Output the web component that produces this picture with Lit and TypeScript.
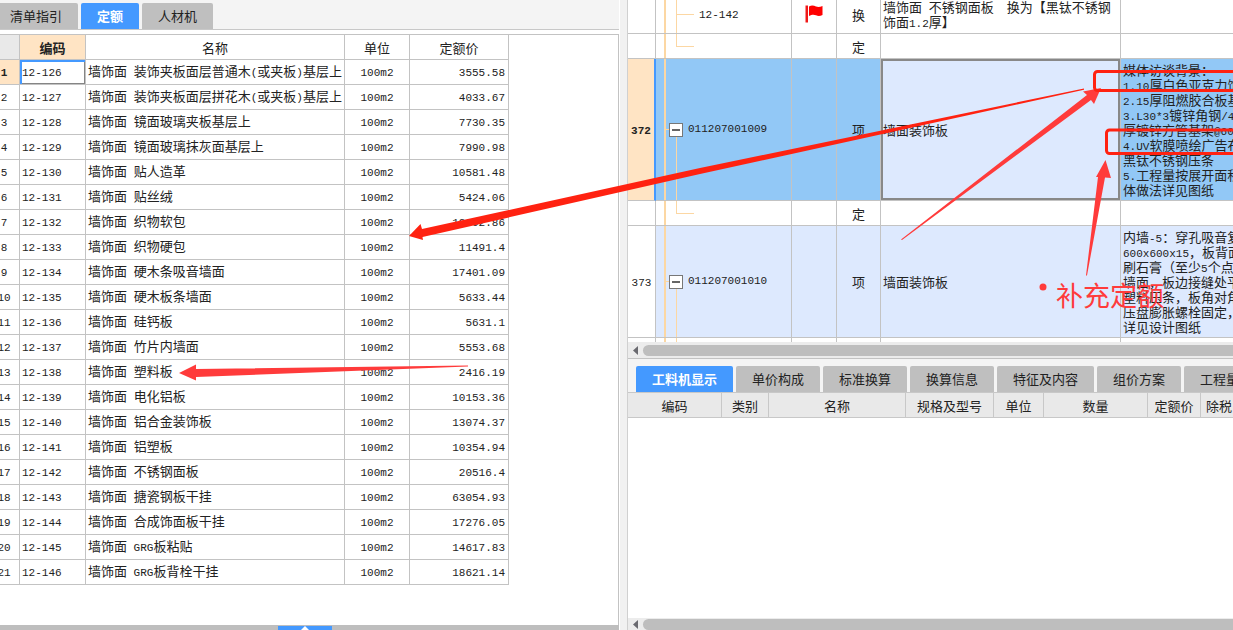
import { LitElement, html, svg, css, nothing, TemplateResult } from "lit";
import { customElement } from "lit/decorators.js";
import { classMap } from "lit/directives/class-map.js";

/** Half-width runs are set in the monospaced face, the rest in the CJK face. */
function mixed(text: string) {
  return text
    .split(/([\x20-\x7e]+)/)
    .filter((part) => part !== "")
    .map((part) => (/^[\x20-\x7e]/.test(part) ? html`<span class="mono">${part}</span>` : part));
}

const quotas: [string, string, string][] = [
  ["12-126", "墙饰面 装饰夹板面层普通木(或夹板)基层上", "3555.58"],
  ["12-127", "墙饰面 装饰夹板面层拼花木(或夹板)基层上", "4033.67"],
  ["12-128", "墙饰面 镜面玻璃夹板基层上", "7730.35"],
  ["12-129", "墙饰面 镜面玻璃抹灰面基层上", "7990.98"],
  ["12-130", "墙饰面 贴人造革", "10581.48"],
  ["12-131", "墙饰面 贴丝绒", "5424.06"],
  ["12-132", "墙饰面 织物软包", "12002.86"],
  ["12-133", "墙饰面 织物硬包", "11491.4"],
  ["12-134", "墙饰面 硬木条吸音墙面", "17401.09"],
  ["12-135", "墙饰面 硬木板条墙面", "5633.44"],
  ["12-136", "墙饰面 硅钙板", "5631.1"],
  ["12-137", "墙饰面 竹片内墙面", "5553.68"],
  ["12-138", "墙饰面 塑料板", "2416.19"],
  ["12-139", "墙饰面 电化铝板", "10153.36"],
  ["12-140", "墙饰面 铝合金装饰板", "13074.37"],
  ["12-141", "墙饰面 铝塑板", "10354.94"],
  ["12-142", "墙饰面 不锈钢面板", "20516.4"],
  ["12-143", "墙饰面 搪瓷钢板干挂", "63054.93"],
  ["12-144", "墙饰面 合成饰面板干挂", "17276.05"],
  ["12-145", "墙饰面 GRG板粘贴", "14617.83"],
  ["12-146", "墙饰面 GRG板背栓干挂", "18621.14"],
];

interface Item {
  kind: "first" | "leaf" | "parent" | "tail";
  height: "h39" | "h25" | "h142" | "h112" | "h5";
  no?: string;
  code?: string;
  flag?: boolean;
  type?: string;
  name?: string[];
  feature?: string[];
  current?: boolean;
}

const items: Item[] = [
  {
    kind: "first", height: "h39", code: "12-142", flag: true, type: "换",
    name: ["墙饰面 不锈钢面板  换为【黑钛不锈钢", "饰面1.2厚】"],
  },
  { kind: "leaf", height: "h25", type: "定" },
  {
    kind: "parent", height: "h142", no: "372", code: "011207001009", type: "项", current: true,
    name: ["墙面装饰板"],
    feature: [
      "媒体访谈背景：",
      "1.10厚白色亚克力饰",
      "2.15厚阻燃胶合板基",
      "3.L30*3镀锌角钢/4",
      "厚镀锌方管基架@60",
      "4.UV软膜喷绘广告布",
      "黑钛不锈钢压条",
      "5.工程量按展开面积",
      "体做法详见图纸",
    ],
  },
  { kind: "leaf", height: "h25", type: "定" },
  {
    kind: "parent", height: "h112", no: "373", code: "011207001010", type: "项",
    name: ["墙面装饰板"],
    feature: [
      "内墙-5：穿孔吸音复",
      "600x600x15，板背面",
      "刷石膏（至少5个点",
      "墙面，板边接缝处平",
      "塑料压条，板角对角",
      "压盘膨胀螺栓固定，",
      "详见设计图纸",
    ],
  },
  { kind: "tail", height: "h5" },
];

const base = css`
  * { box-sizing: border-box; }
  .mono {
    font-family: "Liberation Mono", monospace;
    font-size: 11px;
    white-space: pre;
  }
  button { font: inherit; color: inherit; border: 0; margin: 0; }
  table { border-collapse: separate; border-spacing: 0; table-layout: fixed; }
  th, td { padding: 0; font-weight: 400; overflow: hidden; white-space: nowrap; vertical-align: middle; }
`;

@customElement("tab-strip")
class TabStrip extends LitElement {
  static properties = { tabs: { attribute: false }, active: { type: Number } };
  declare tabs: string[];
  declare active: number;

  static styles = [
    base,
    css`
      :host { display: block; overflow: hidden; }
      .tabs { display: flex; gap: 3px; }
      .tab {
        flex: none;
        height: 26px;
        padding: 0 16px;
        line-height: 26px;
        background: #bfbfbf;
        color: #222;
        border-radius: 2px 2px 0 0;
        white-space: nowrap;
      }
      .on { background: #4499ff; color: #fff; font-weight: 700; }
    `,
  ];

  render() {
    return html`<div class="tabs" role="tablist">
      ${this.tabs.map(
        (t, i) => html`<button
          role="tab"
          aria-selected=${i === this.active ? "true" : "false"}
          class=${classMap({ tab: true, on: i === this.active })}
          @click=${() => (this.active = i)}
        >${t}</button>`,
      )}
    </div>`;
  }
}

@customElement("scroll-track")
class ScrollTrack extends LitElement {
  static styles = css`
    :host { display: flex; align-items: center; gap: 5px; height: 16px; padding-left: 5px; background: #ececec; overflow: hidden; }
    .arrow { flex: none; display: block; }
    .thumb { flex: 1; height: 11px; border-radius: 6px 0 0 6px; background: #bebebe; }
  `;
  render() {
    return html`<svg class="arrow" width="5" height="9" viewBox="0 0 5 9"><path d="M5 0V9L0 4.5Z" fill="#6a6a70" /></svg>
      <div class="thumb"></div>`;
  }
}

@customElement("quota-table")
class QuotaTable extends LitElement {
  static styles = [
    base,
    css`
      :host { display: block; overflow: hidden; }
      .grid { width: 520px; margin-left: -11px; }
      .c-no { width: 31px; }
      .c-code { width: 66px; }
      .c-name { width: 259px; }
      .c-unit { width: 65px; }
      .c-price { width: 99px; }
      th, td { height: 25px; border-right: 1px solid #c3c3c3; border-bottom: 1px solid #c3c3c3; line-height: 15px; text-align: center; }
      .corner { background: #e9e9e9; }
      .picked { background: #ffe4c4; font-weight: 700; }
      .code, .name { text-align: left; padding-left: 2px; }
      .price { text-align: right; padding-right: 3px; }
      .cell { box-shadow: inset 2px 2px #4499ff, inset -1px -1px #858585; }
    `,
  ];

  render() {
    return html`<table class="grid">
      <colgroup>
        <col class="c-no" /><col class="c-code" /><col class="c-name" /><col class="c-unit" /><col class="c-price" />
      </colgroup>
      <thead>
        <tr><th class="corner"></th><th class="picked">编码</th><th>名称</th><th>单位</th><th>定额价</th></tr>
      </thead>
      <tbody>
        ${quotas.map(
          ([code, name, price], i) => html`<tr>
            <th class=${classMap({ picked: i === 0 })} scope="row">${mixed(String(i + 1))}</th>
            <td class=${classMap({ code: true, cell: i === 0 })}>${mixed(code)}</td>
            <td class="name">${mixed(name)}</td>
            <td>${mixed("100m2")}</td>
            <td class="price">${mixed(price)}</td>
          </tr>`,
        )}
      </tbody>
    </table>`;
  }
}

@customElement("bill-table")
class BillTable extends LitElement {
  static styles = [
    base,
    css`
      :host { display: block; overflow: hidden; }
      .grid { width: 100%; margin-top: -5px; }
      .c-no { width: 28px; }
      .c-code { width: 136px; }
      .c-flag { width: 45px; }
      .c-type { width: 44px; }
      .c-name { width: 240px; }
      th, td { border-right: 1px solid #c3c3c3; border-bottom: 1px solid #c3c3c3; line-height: 15px; text-align: center; }
      .h39 { height: 39px; }
      .h25 { height: 25px; }
      .h142 { height: 142px; }
      .h112 { height: 112px; }
      .h5 { height: 5px; }
      .h5 th, .h5 td { border-bottom: 0; }
      td:last-child { border-right: 0; }
      .parent td { background-color: #dde9fe; }
      .current td { background-color: #92c8f6; }
      .current .no { background-color: #ffe4c4; border-right: 2px solid #4499ff; font-weight: 700; }
      .current .name { background-color: #dde9fe; box-shadow: inset 0 0 0 2px #888; }
      .name, .feature { text-align: left; padding-left: 2px; }
      .line { display: block; white-space: pre; height: 15px; }

      /* Tree guides: the outer branch runs through, the inner one starts or ends at the row's middle. */
      .tree {
        text-align: left;
        background-repeat: no-repeat;
        background-image: linear-gradient(#fcd7a3, #fcd7a3), linear-gradient(#fcd7a3, #fcd7a3), linear-gradient(#fcd7a3, #fcd7a3);
      }
      .first .tree, .leaf .tree {
        background-size: 2px 100%, 1px 50%, 18px 1px;
        background-position: 8px 0, 20px 0, 20px 50%;
      }
      .first .tree { background-size: 2px 100%, 1px 100%, 18px 1px; padding-left: 43px; }
      .parent .tree {
        background-size: 2px 100%, 1px 50%, 5px 1px;
        background-position: 8px 0, 20px 100%, 8px 50%;
        padding-left: 13px;
      }
      .tail .tree { background-size: 2px 100%, 1px 100%, 0 0; background-position: 8px 0, 20px 0, 0 0; }
      .node { display: flex; align-items: center; gap: 5px; }
      .toggle { flex: none; width: 14px; height: 14px; padding: 0; border: 1px solid #777; background: #fff; display: grid; place-items: center; }
      .flag { display: block; margin: 0 auto; }
    `,
  ];

  private lines(list?: string[]) {
    return list ? list.map((l) => html`<span class="line">${mixed(l)}</span>`) : nothing;
  }

  private codeCell(it: Item) {
    if (!it.code) return nothing;
    if (it.kind !== "parent") return mixed(it.code);
    return html`<div class="node">
      <button class="toggle" aria-label=${it.code} aria-expanded="true">
        <svg width="8" height="2" viewBox="0 0 8 2"><path d="M0 0H8V2H0Z" fill="#666" /></svg>
      </button>${mixed(it.code)}
    </div>`;
  }

  render() {
    return html`<table class="grid">
      <colgroup>
        <col class="c-no" /><col class="c-code" /><col class="c-flag" /><col class="c-type" /><col class="c-name" /><col />
      </colgroup>
      <tbody>
        ${items.map(
          (it) => html`<tr class=${classMap({ [it.kind]: true, [it.height]: true, current: !!it.current })}>
            <th class="no" scope="row">${it.no ? mixed(it.no) : nothing}</th>
            <td class="tree">${this.codeCell(it)}</td>
            <td>
              ${it.flag
                ? html`<svg class="flag" width="18" height="18" viewBox="0 0 18 18">
                    <path d="M0.5 0.5H3V17.5H0.5Z" fill="#f01818" />
                    <path d="M4 1.5C7-0.2 9 0.8 11 1.5S15 2 17.5 1V10C15 11.2 13 11.2 11 10.3S7 9.3 4 11Z" fill="#ff0000" />
                  </svg>`
                : nothing}
            </td>
            <td>${it.type ?? nothing}</td>
            <td class="name">${this.lines(it.name)}</td>
            <td class="feature">${this.lines(it.feature)}</td>
          </tr>`,
        )}
      </tbody>
    </table>`;
  }
}

@customElement("resource-table")
class ResourceTable extends LitElement {
  static styles = [
    base,
    css`
      :host { display: block; overflow: hidden; }
      .grid { width: 100%; }
      .w94 { width: 94px; }
      .w47 { width: 47px; }
      .w137 { width: 137px; }
      .w88 { width: 88px; }
      .w50 { width: 50px; }
      .w104 { width: 104px; }
      .w53 { width: 53px; }
      th { height: 26px; background: #e9e9e9; border-right: 1px solid #c8c8c8; border-bottom: 1px solid #c8c8c8; border-top: 1px solid #c8c8c8; }
      .last { text-align: left; padding-left: 5px; border-right: 0; }
    `,
  ];
  render() {
    return html`<table class="grid">
      <thead>
        <tr>
          <th class="w94">编码</th><th class="w47">类别</th><th class="w137">名称</th><th class="w88">规格及型号</th>
          <th class="w50">单位</th><th class="w104">数量</th><th class="w53">定额价</th><th class="last">除税</th>
        </tr>
      </thead>
    </table>`;
  }
}

/** Hand-drawn markup laid over both panes. */
@customElement("mark-up")
class MarkUp extends LitElement {
  static styles = css`
    :host { position: absolute; inset: 0; overflow: hidden; pointer-events: none; }
    .ink { display: block; width: 100%; height: 100%; }
    .note { font: 27px "Noto Sans CJK SC", sans-serif; fill: #ff3b3b; }
  `;
  private shape(d: string, fill: string): TemplateResult {
    return svg`<path d=${d} fill=${fill} />` as unknown as TemplateResult;
  }
  render() {
    return html`<svg class="ink">
      ${this.shape("M1084 88.5L700 168L422 229L420.5 224L409 236L423 240L422.5 237L700 174L1084 89.8Z", "#ff2211")}
      ${this.shape("M468 365.5L196 369L196 364.5L179 373L196 380.5L196 377L468 366.5Z", "#ff3b3b")}
      ${this.shape("M901 239.5L1087 95L1083 91.5L1101 88L1094 104L1091 100L902 240Z", "#ff3b3b")}
      ${this.shape("M1086 275.5L1098 177L1096 177L1105.5 160L1111 178L1105 177.5L1087 275.5Z", "#ff3b3b")}
      <rect x="1094.5" y="71.5" width="160" height="19" rx="3" fill="none" stroke="#ff2211" stroke-width="3" />
      <rect x="1106.5" y="130" width="160" height="23.5" rx="3" fill="none" stroke="#ff2211" stroke-width="3" />
      <circle cx="1043" cy="287" r="3.5" fill="#ff3b3b" />
      <text class="note" x="1056" y="306">补充定额</text>
    </svg>`;
  }
}

@customElement("app-root")
class AppRoot extends LitElement {
  static styles = [
    base,
    css`
      :host {
        position: relative;
        display: grid;
        grid-template-columns: 619fr 9px 605fr;
        height: 100vh;
        overflow: hidden;
        background: #fff;
        color: #222;
        font: 13px/15px "Noto Sans CJK SC", sans-serif;
      }
      .left, .right, .top, .bottom { display: flex; flex-direction: column; min-width: 0; min-height: 0; }
      .left { overflow: hidden; }
      .bar { background: #f4f4f4; padding-top: 3px; border-bottom: 1px solid #c8c8c8; }
      .bar-tabs { margin-left: -6px; }
      .sheet { flex: 1; min-height: 0; margin-top: 4px; border-top: 1px solid #c3c3c3; border-right: 1px solid #c3c3c3; overflow: hidden; }
      .foot { height: 5px; background: #bebebe; display: flex; justify-content: center; padding: 1px 10px 0 0; }
      .pull { width: 54px; height: 4px; padding: 0; background: #4499ff; display: grid; place-items: center; }
      .split { background: #f1f1f1; border-right: 1px solid #d0d0d0; border-left: 1px solid #fff; }
      .top { flex: 359 1 0; border-bottom: 1px solid #c3c3c3; }
      .bottom { flex: 271 1 0; }
      .rows { flex: 1; min-height: 0; }
      .low-bar { background: #f4f4f4; padding: 7px 0 0 8px; }
      .fill { flex: 1; }
      .low-track { height: 12px; }
    `,
  ];

  render() {
    return html`
      <section class="left">
        <div class="bar"><tab-strip class="bar-tabs" .tabs=${["清单指引", "定额", "人材机"]} .active=${1}></tab-strip></div>
        <div class="sheet"><quota-table></quota-table></div>
        <div class="foot">
          <button class="pull" aria-label="展开">
            <svg width="8" height="4" viewBox="0 0 8 4"><path d="M4 0L8 4H0Z" fill="#fff" /></svg>
          </button>
        </div>
      </section>
      <div class="split"></div>
      <section class="right">
        <div class="top">
          <bill-table class="rows"></bill-table>
          <scroll-track></scroll-track>
        </div>
        <div class="bottom">
          <div class="low-bar">
            <tab-strip
              .tabs=${["工料机显示", "单价构成", "标准换算", "换算信息", "特征及内容", "组价方案", "工程量"]}
              .active=${0}
            ></tab-strip>
          </div>
          <resource-table></resource-table>
          <div class="fill"></div>
          <scroll-track class="low-track"></scroll-track>
        </div>
      </section>
      <mark-up></mark-up>
    `;
  }
}
